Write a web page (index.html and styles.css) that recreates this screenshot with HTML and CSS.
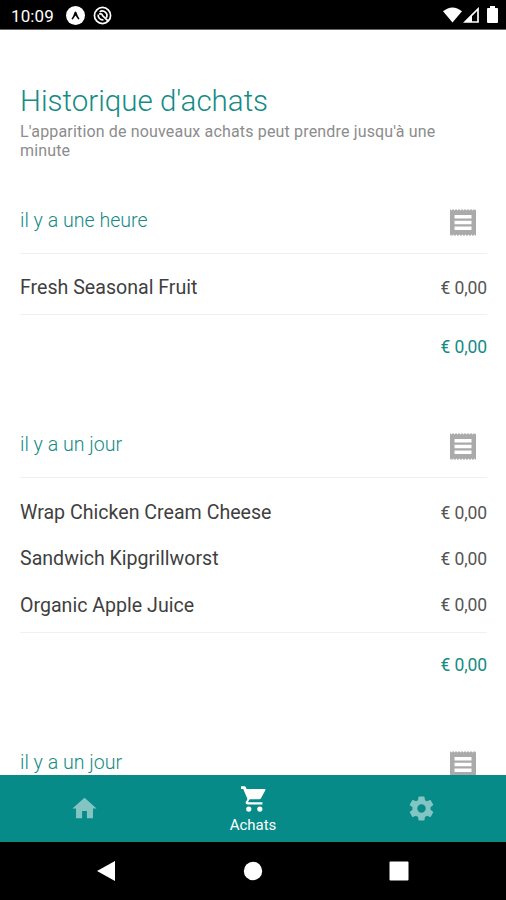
FILE: index.html
```html
<!DOCTYPE html>
<html lang="fr">
<head>
<meta charset="utf-8">
<title>Historique d'achats</title>
<link rel="stylesheet" href="styles.css">
</head>
<body>
<svg class="defs" width="0" height="0"><symbol id="receipt" viewBox="0 0 26 27" preserveAspectRatio="none"><path fill-rule="evenodd" d="M0 0l1.500 1.500L3 0l1.500 1.500L6 0l1.500 1.500L9 0l1.500 1.500L12 0l1.500 1.500L15 0l1.500 1.500L18 0l1.500 1.500L21 0l1.500 1.500L24 0l1 1.500L26 0v27l-1.500-1.500L23 27l-1.500-1.500L20 27l-1.500-1.500L17 27l-1.500-1.500L14 27l-1.500-1.500L11 27l-1.500-1.500L8 27l-1.500-1.500L5 27l-1.500-1.500L2 27l-1-1.500L0 27zM4.500 6v3.500h17V6zm0 5.800v3.500h17v-3.500zm0 5.800V21h17v-3.400z"/></symbol></svg>
<header class="status">
  <span class="clock">10:09</span>
  <svg class="note" viewBox="0 0 20 20"><circle cx="10" cy="10" r="10" fill="#fff"/><path d="M5.800 13.500Q8 10 9 6.500q1-1.500 2 0 1 3.500 3.200 7-1.300 1.500-2.200-.5l-2-3-2 3q-1 2-2.200.5z" fill="#000"/></svg>
  <svg class="note" viewBox="0 0 20 20" fill="none" stroke="#fff" stroke-width="1.800"><circle cx="10" cy="10" r="8.500"/><path d="M7 6.200a4.800 4.800 0 0 1 7 6.200M5.500 9a4.800 4.800 0 0 0 5.500 5.500M6.500 8.500q3-1 3.500 1.500l6 6"/></svg>
  <span class="space"></span>
  <svg class="wifi" viewBox="0 0 20 16"><path d="M0 4Q10-4 20 4L10 16z" fill="#fff"/></svg>
  <svg class="signal" viewBox="0 0 16 16"><path d="M15 2v13H2z" fill="none" stroke="#fff" stroke-width="1.700"/><path d="M9 8v7H2z" fill="#fff"/></svg>
  <svg class="battery" viewBox="0 0 11 17"><path d="M3 0h5v2h2q1 0 1 1v13q0 1-1 1H1q-1 0-1-1V3q0-1 1-1h2z" fill="#fff"/></svg>
</header>
<main>
  <h1>Historique d'achats</h1>
  <p class="intro">L'apparition de nouveaux achats peut prendre jusqu'à une minute</p>
  <section class="purchase">
    <div class="head"><h2>il y a une heure</h2><svg class="receipt"><use href="#receipt"/></svg></div>
    <div class="items"><div class="row"><span>Fresh Seasonal Fruit</span><span class="price">€ 0,00</span></div></div>
    <div class="total">€ 0,00</div>
  </section>
  <section class="purchase">
    <div class="head"><h2>il y a un jour</h2><svg class="receipt"><use href="#receipt"/></svg></div>
    <div class="items"><div class="row"><span>Wrap Chicken Cream Cheese</span><span class="price">€ 0,00</span></div><div class="row"><span>Sandwich Kipgrillworst</span><span class="price">€ 0,00</span></div><div class="row"><span>Organic Apple Juice</span><span class="price">€ 0,00</span></div></div>
    <div class="total">€ 0,00</div>
  </section>
  <section class="purchase">
    <div class="head"><h2>il y a un jour</h2><svg class="receipt"><use href="#receipt"/></svg></div>
  </section>
</main>
<nav class="tabs">
  <div class="tab dim"><svg viewBox="0 0 24 24"><path d="M10 20v-6h4v6h5v-8h3L12 3 2 12h3v8z"/></svg></div>
  <div class="tab active"><svg viewBox="0 0 80 80"><path d="M3 1h11q3 0 4 3l2 5h56q4 0 2 4L65 37q-2 4-6 4H30l-5 7q0 2 2 2h42v7H24q-9 0-6-8l5-9L10 9H3z"/><circle cx="27" cy="71" r="8"/><circle cx="61" cy="71" r="8"/></svg><span>Achats</span></div>
  <div class="tab dim"><svg viewBox="0 0 24 24"><path d="M19.430 12.980c.04-.32.07-.64.07-.98s-.03-.66-.07-.98l2.110-1.650c.19-.15.24-.42.12-.64l-2-3.460c-.12-.22-.39-.3-.61-.22l-2.490 1c-.52-.4-1.080-.73-1.690-.98l-.38-2.650A.49.49 0 0 0 14 2h-4c-.25 0-.46.18-.49.42l-.38 2.650c-.61.25-1.170.59-1.690.98l-2.490-1c-.23-.09-.49 0-.61.22l-2 3.460c-.13.22-.07.49.12.64l2.110 1.650c-.04.32-.07.65-.07.98s.03.66.07.98l-2.110 1.650c-.19.15-.24.42-.12.64l2 3.460c.12.22.39.3.61.22l2.490-1c.52.4 1.080.73 1.690.98l.38 2.650c.03.24.24.42.49.42h4c.25 0 .46-.18.49-.42l.38-2.650c.61-.25 1.170-.59 1.690-.98l2.490 1c.23.09.49 0 .61-.22l2-3.460c.12-.22.07-.49-.12-.64zM12 15.500a3.500 3.500 0 1 1 0-7 3.500 3.500 0 0 1 0 7z"/></svg></div>
</nav>
<footer class="system">
  <svg viewBox="0 0 20 20"><path d="M19 0v20L1 10z"/></svg>
  <svg viewBox="0 0 20 20"><circle cx="10" cy="10" r="9.200"/></svg>
  <svg viewBox="0 0 20 20"><rect x=".5" y=".5" width="19" height="19" rx="1"/></svg>
</footer>
</body>
</html>
```
FILE: styles.css
```css
* { box-sizing: border-box; }
body { margin: 0; width: 506px; height: 900px; overflow: hidden; display: flex; flex-direction: column; background: #fff; font-family: Roboto, sans-serif; color: #3f3f3f; }
.defs { position: absolute; }
.status { height: 30px; flex: none; background: #000; color: #fff; display: flex; align-items: center; padding: 0 8px 0 11px; border-bottom: 1px solid #666; }
.clock { font-size: 17px; font-weight: 400; letter-spacing: .1px; width: 55px; padding-top: 2px; }
.note { width: 19px; height: 19px; margin: 1px 8px 0 0; }
.space { flex: 1; }
.wifi { width: 19px; height: 16px; margin-right: 1px; }
.signal { width: 16px; height: 16px; margin-right: 8px; }
.battery { width: 11px; height: 17px; }
main { flex: 1; min-height: 0; overflow: hidden; padding: 52px 19px 0 20px; }
h1 { margin: 0; font-size: 29.500px; line-height: 38px; font-weight: 300; color: #148b86; white-space: nowrap; }
.intro { margin: 1.500px 0 0; font-size: 16px; line-height: 19px; letter-spacing: .16px; color: #8c8c8c; width: 440px; }
.purchase { margin-bottom: 51.500px; }
.intro + .purchase { margin-top: 28px; }
.head { height: 66px; border-bottom: 1px solid #f0f0f0; display: flex; align-items: center; justify-content: space-between; padding-right: 11px; }
h2 { margin: 0; font-size: 19.600px; font-weight: 300; color: #148b86; }
.receipt { width: 26px; height: 27px; fill: #aaa; margin-top: 4px; }
.items { padding: 11px 0 3px; border-bottom: 1px solid #f0f0f0; }
.row { height: 46.400px; display: flex; align-items: center; justify-content: space-between; font-size: 19.600px; }
.price { font-size: 17.500px; letter-spacing: -.1px; color: #555; }
.total { height: 46px; padding-top: 20px; font-size: 17.500px; letter-spacing: -.1px; line-height: 24px; text-align: right; color: #148b86; }
.tabs { height: 67px; flex: none; background: #078b88; display: flex; }
.tab { flex: 1; display: flex; flex-direction: column; align-items: center; justify-content: center; color: #fff; font-size: 15px; line-height: 18px; }
.tab svg { width: 29px; height: 29px; fill: #fff; }
.tab.active svg { width: 26px; height: 26px; }
.active span { margin-top: 4px; }
.active { padding-top: 2px; }
.dim svg { opacity: .5; }
.system { height: 58px; flex: none; background: #000; display: flex; align-items: center; justify-content: space-between; padding: 0 97px 0 96px; }
.system svg { width: 20px; height: 20px; fill: #fff; }
```
